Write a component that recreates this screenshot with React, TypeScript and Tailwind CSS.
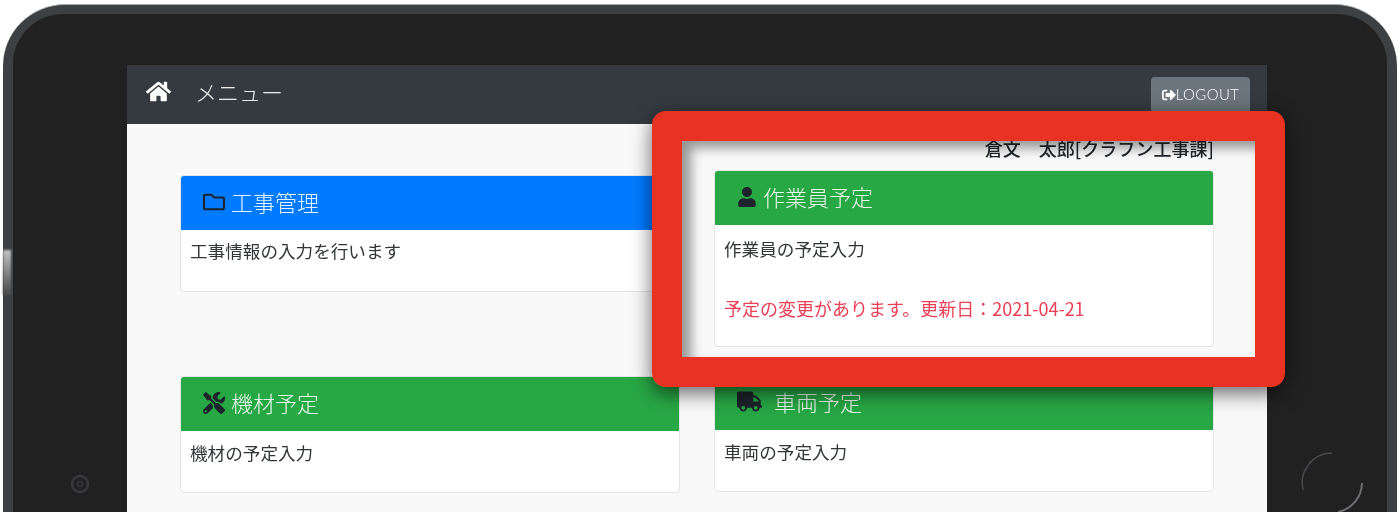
import React from 'react';
import { FaHome, FaRegFolder, FaSignOutAlt, FaTools, FaTruck, FaUser } from 'react-icons/fa';

type CardProps = {
  icon: React.ReactNode;
  title: string;
  text: string;
  note?: string;
  color: string;
  className: string;
  bodyClass?: string;
};

function MenuCard({ icon, title, text, note, color, className, bodyClass = 'pt-[9px]' }: CardProps) {
  return (
    <div className={`overflow-hidden rounded-[4px] border border-black/10 bg-white ${className}`}>
      <div className={`flex h-[54px] items-center pb-[3px] pl-[22px] text-[22px] text-white/90 ${color}`}>
        <span className="text-[#1c232b]">{icon}</span>
        <span className="ml-[6px] font-light">{title}</span>
      </div>
      <div className={`px-[9px] text-[17.6px] leading-[24px] text-[#333638] ${bodyClass}`}>
        <p>{text}</p>
        {note && <p className="mt-[35px] text-[18px] text-[#ea3f55]">{note}</p>}
      </div>
    </div>
  );
}

export default function App() {
  return (
    <div
      className="relative h-[513px] w-[1400px] overflow-hidden bg-white pb-px pl-[3px] pr-[3px] pt-[4px]"
      style={{ fontFamily: '"Noto Sans CJK JP", "Noto Sans", sans-serif' }}
    >
      {/* tablet frame */}
      <div className="h-full rounded-t-[62px] border-t border-[#a9abab] bg-[#3d4042] px-[10px] pt-[9px] blur-[0.4px]">
        <div className="flex h-full justify-center rounded-t-[50px] bg-[#212122] pl-[114px] pr-[120px] pt-[51px]">
          <div className="flex h-full w-[1140px] flex-col bg-[#f9f9fa]">
            {/* header */}
            <header className="flex h-[59px] shrink-0 items-center justify-between bg-[#343a40] pl-[19px] pr-[17px] text-white">
              <div className="flex items-center pb-[6px]">
                <FaHome className="text-[25px]" />
                <span className="ml-[24px] text-[22px] font-light text-white/90">メニュー</span>
              </div>
              <button className="flex h-[36px] w-[99px] items-center justify-center rounded-[4px] bg-[#6c757d] text-[15px] font-light tracking-[0.4px] text-white" style={{ fontFamily: 'Lato, sans-serif' }}>
                <FaSignOutAlt className="text-[14px]" />
                LOGOUT
              </button>
            </header>

            {/* cards */}
            <main className="grid flex-1 grid-cols-[500px_500px] gap-x-[34px] pl-[53px]">
              <div className="flex flex-col">
                <MenuCard
                  className="mt-[51px] h-[117px]"
                  color="bg-[#007bff]"
                  icon={<FaRegFolder />}
                  title="工事管理"
                  text="工事情報の入力を行います"
                />
                <MenuCard
                  className="mt-[84px] h-[117px]"
                  color="bg-[#28a745]"
                  icon={<FaTools />}
                  title="機材予定"
                  text="機材の予定入力"
                  bodyClass="pt-[10px]"
                />
              </div>
              <div className="flex flex-col">
                <p className="mt-[12px] h-[24px] whitespace-nowrap text-right text-[18px] leading-[24px] font-medium text-[#212529] blur-[0.5px]">
                  倉文　太郎[クラフン工事課]
                </p>
                <MenuCard
                  className="mt-[10px] h-[177px] [&_p]:blur-[0.5px]"
                  color="bg-[#28a745]"
                  icon={<FaUser className="text-[20px]" />}
                  title="作業員予定"
                  text="作業員の予定入力"
                  note="予定の変更があります。更新日：2021-04-21"
                  bodyClass="pt-[12px]"
                />
                <MenuCard
                  className="mt-[28px] h-[117px]"
                  color="bg-[#28a745]"
                  icon={<FaTruck className="mr-[6px] text-[25px]" />}
                  title="車両予定"
                  text="車両の予定入力"
                  bodyClass="pt-[10px]"
                />
              </div>
            </main>
          </div>
        </div>
      </div>

      {/* side button highlight */}
      <div className="absolute left-[3px] top-[250px] h-[45px] w-[8px] bg-gradient-to-b from-[#c4c4c4] to-[#4a4a4a] blur-[1px]" />

      {/* camera and home button on the bezel */}
      <svg className="absolute left-[68px] top-[472px]" width="24" height="24" viewBox="0 0 24 24" fill="none">
        <circle cx="12" cy="12" r="8" stroke="#38383c" strokeWidth="2.5" />
        <circle cx="12" cy="12" r="2.5" stroke="#38383c" strokeWidth="1.5" />
      </svg>
      <svg className="absolute left-[1298px] top-[449px]" width="68" height="63" viewBox="0 0 68 63" fill="none">
        <path d="M5 41 A30 30 0 0 1 34 4" stroke="#4a4b4e" strokeWidth="1.5" />
        <path d="M64 34 A30 30 0 0 1 40 63" stroke="#6c6d70" strokeWidth="2" />
      </svg>

      {/* red highlight box */}
      <div className="absolute left-[652px] top-[111px] h-[276px] w-[633px] rounded-[14px] border-[30px] border-[#e83323] shadow-[inset_9px_7px_12px_rgba(0,0,0,0.4),0_6px_20px_rgba(0,0,0,0.6)]" />
    </div>
  );
}
